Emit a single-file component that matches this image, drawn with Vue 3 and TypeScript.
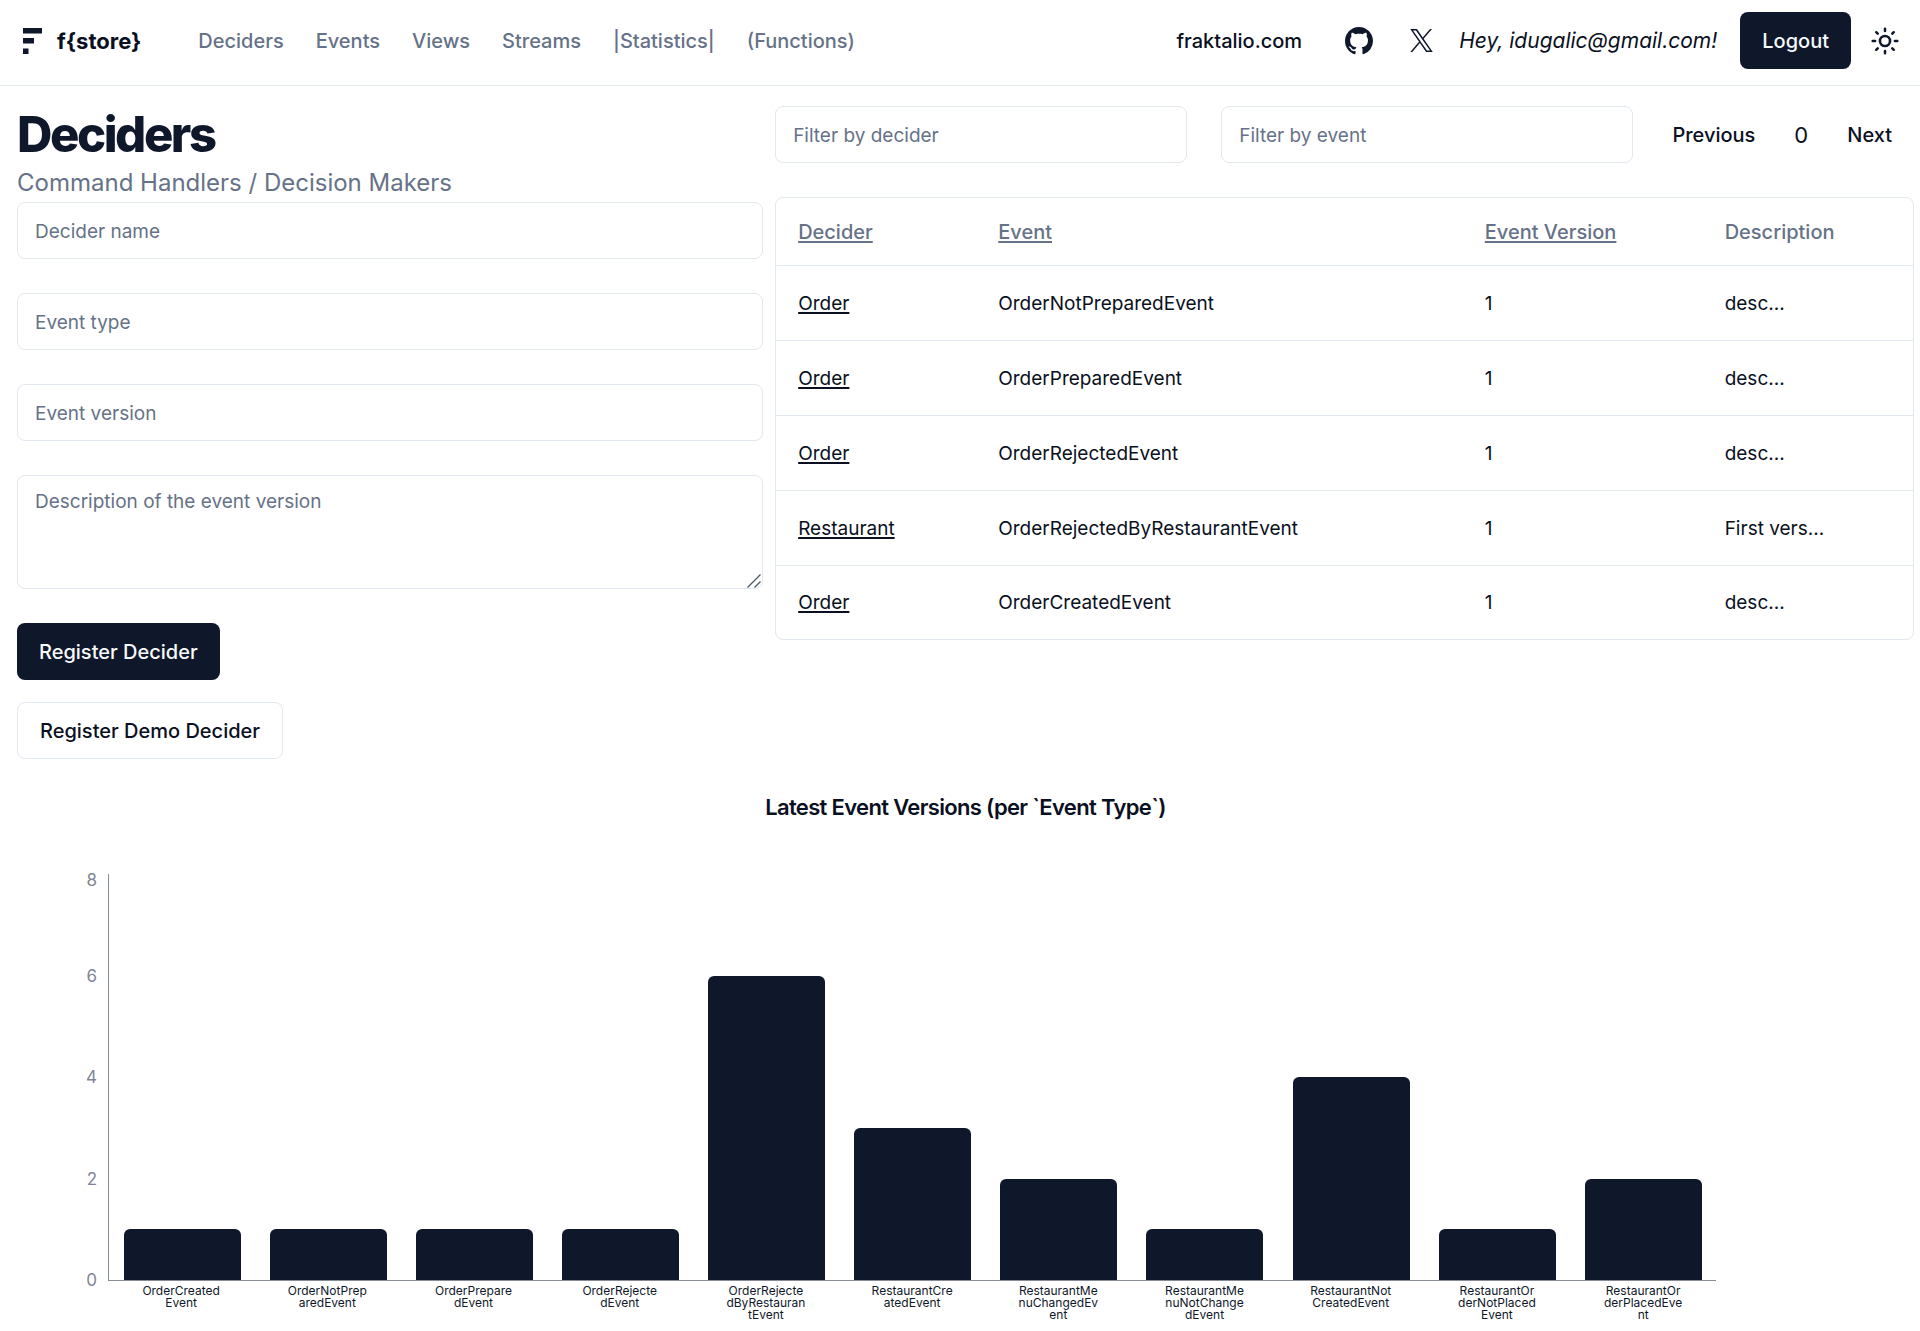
<script setup lang="ts">
import { computed, ref } from 'vue'

interface EventRow {
  decider: string
  event: string
  version: number
  description: string
}

interface Bar {
  lines: string[]
  value: number
}

const navLinks: string[] = ['Deciders', 'Events', 'Views', 'Streams', '|Statistics|', '(Functions)']

const rows: EventRow[] = [
  { decider: 'Order', event: 'OrderNotPreparedEvent', version: 1, description: 'desc...' },
  { decider: 'Order', event: 'OrderPreparedEvent', version: 1, description: 'desc...' },
  { decider: 'Order', event: 'OrderRejectedEvent', version: 1, description: 'desc...' },
  { decider: 'Restaurant', event: 'OrderRejectedByRestaurantEvent', version: 1, description: 'First vers...' },
  { decider: 'Order', event: 'OrderCreatedEvent', version: 1, description: 'desc...' },
]

const axisMax = 8
const ticks: number[] = [8, 6, 4, 2, 0]
const bars: Bar[] = [
  { lines: ['OrderCreated', 'Event'], value: 1 },
  { lines: ['OrderNotPrep', 'aredEvent'], value: 1 },
  { lines: ['OrderPrepare', 'dEvent'], value: 1 },
  { lines: ['OrderRejecte', 'dEvent'], value: 1 },
  { lines: ['OrderRejecte', 'dByRestauran', 'tEvent'], value: 6 },
  { lines: ['RestaurantCre', 'atedEvent'], value: 3 },
  { lines: ['RestaurantMe', 'nuChangedEv', 'ent'], value: 2 },
  { lines: ['RestaurantMe', 'nuNotChange', 'dEvent'], value: 1 },
  { lines: ['RestaurantNot', 'CreatedEvent'], value: 4 },
  { lines: ['RestaurantOr', 'derNotPlaced', 'Event'], value: 1 },
  { lines: ['RestaurantOr', 'derPlacedEve', 'nt'], value: 2 },
]

const deciderFilter = ref('')
const eventFilter = ref('')
const page = ref(0)

const visibleRows = computed(() =>
  rows.filter(
    (r) =>
      r.decider.toLowerCase().includes(deciderFilter.value.toLowerCase()) &&
      r.event.toLowerCase().includes(eventFilter.value.toLowerCase()),
  ),
)
</script>

<template>
  <div class="app">
    <header class="topbar">
      <a class="brand" href="#">
        <svg class="brand-mark" viewBox="0 0 19 26" aria-hidden="true">
          <path d="M0 0h19v5.500H0zM0 10h11v5.500H0zM0 20.500h5.500v5.500H0z" fill="currentColor" />
        </svg>
        <span>f{store}</span>
      </a>
      <nav class="nav">
        <a v-for="link in navLinks" :key="link" href="#">{{ link }}</a>
      </nav>
      <div class="account">
        <a class="site" href="#">fraktalio.com</a>
        <a class="icon-link github" href="#" aria-label="GitHub">
          <svg width="28" height="28" viewBox="0 0 16 16" aria-hidden="true">
            <path
              fill="currentColor"
              d="M8 0C3.58 0 0 3.58 0 8c0 3.54 2.29 6.53 5.47 7.59.4.07.55-.17.55-.38 0-.19-.01-.82-.01-1.49-2.01.37-2.53-.49-2.69-.94-.09-.23-.48-.94-.82-1.13-.28-.15-.68-.52-.01-.53.63-.01 1.08.58 1.23.82.72 1.21 1.87.87 2.33.66.07-.52.28-.87.51-1.07-1.78-.2-3.64-.89-3.64-3.95 0-.87.31-1.59.82-2.15-.08-.2-.36-1.02.08-2.12 0 0 .67-.21 2.2.82.64-.18 1.32-.27 2-.27s1.36.09 2 .27c1.53-1.04 2.2-.82 2.2-.82.44 1.1.16 1.92.08 2.12.51.56.82 1.27.82 2.15 0 3.07-1.87 3.75-3.65 3.95.29.25.54.73.54 1.48 0 1.07-.01 1.93-.01 2.2 0 .21.15.46.55.38A8.01 8.01 0 0 0 16 8c0-4.42-3.58-8-8-8z"
            />
          </svg>
        </a>
        <a class="icon-link x-link" href="#" aria-label="X">
          <svg width="23" height="23" viewBox="0 0 1200 1227" aria-hidden="true">
            <path
              fill="currentColor"
              d="M714.163 519.284L1160.89 0H1055.03L667.137 450.887L357.328 0H0L468.492 681.821L0 1226.37H105.866L515.491 750.218L842.672 1226.37H1200L714.137 519.284H714.163ZM569.165 687.828L521.697 619.934L144.011 79.6944H306.615L611.412 515.685L658.88 583.579L1055.08 1150.3H892.476L569.165 687.854V687.828Z"
            />
          </svg>
        </a>
        <em class="greeting">Hey, idugalic@gmail.com!</em>
        <button class="btn btn-primary" type="button">Logout</button>
        <button class="theme-toggle" type="button" aria-label="Toggle theme">
          <svg width="28" height="28" viewBox="0 0 15 15" fill="none" stroke="currentColor" stroke-linecap="round" aria-hidden="true">
            <circle cx="7.5" cy="7.5" r="2.7" stroke-width="1.4" />
            <path
              stroke-width="1.35"
              d="M7.5.9v1.3M7.5 12.8v1.3M.9 7.5h1.3M12.8 7.5h1.3M2.8 2.8l.8.8M11.4 11.4l.8.8M2.8 12.2l.8-.8M11.4 3.6l.8-.8"
            />
          </svg>
        </button>
      </div>
    </header>

    <main class="content">
      <div class="columns">
        <section class="register">
          <h1>Deciders</h1>
          <p class="subtitle">Command Handlers / Decision Makers</p>
          <form class="form" @submit.prevent>
            <input class="field" type="text" placeholder="Decider name" aria-label="Decider name" />
            <input class="field" type="text" placeholder="Event type" aria-label="Event type" />
            <input class="field" type="text" placeholder="Event version" aria-label="Event version" />
            <div class="area-wrap">
              <textarea
                class="field area"
                placeholder="Description of the event version"
                aria-label="Description of the event version"
              ></textarea>
              <svg class="grip" width="14" height="14" viewBox="0 0 14 14" aria-hidden="true">
                <path d="M.5 13.5l13-13M7.500 13.5l6-6" stroke="currentColor" stroke-width="1.3" />
              </svg>
            </div>
            <button class="btn btn-primary" type="submit">Register Decider</button>
          </form>
          <button class="btn btn-outline" type="button">Register Demo Decider</button>
        </section>

        <section class="listing">
          <div class="toolbar">
            <div class="filters">
              <input v-model="deciderFilter" class="field" type="text" placeholder="Filter by decider" aria-label="Filter by decider" />
              <input v-model="eventFilter" class="field" type="text" placeholder="Filter by event" aria-label="Filter by event" />
            </div>
            <div class="pager">
              <button class="btn btn-ghost" type="button" @click="page = Math.max(0, page - 1)">Previous</button>
              <span class="page">{{ page }}</span>
              <button class="btn btn-ghost" type="button" @click="page++">Next</button>
            </div>
          </div>
          <div class="table-frame">
            <table>
              <colgroup>
                <col class="col-decider" />
                <col class="col-event" />
                <col class="col-version" />
                <col />
              </colgroup>
              <thead>
                <tr>
                  <th scope="col"><a href="#">Decider</a></th>
                  <th scope="col"><a href="#">Event</a></th>
                  <th scope="col"><a href="#">Event Version</a></th>
                  <th scope="col">Description</th>
                </tr>
              </thead>
              <tbody>
                <tr v-for="row in visibleRows" :key="row.event">
                  <td><a href="#">{{ row.decider }}</a></td>
                  <td>{{ row.event }}</td>
                  <td>{{ row.version }}</td>
                  <td>{{ row.description }}</td>
                </tr>
              </tbody>
            </table>
          </div>
        </section>
      </div>

      <section class="versions">
        <h2>Latest Event Versions (per `Event Type`)</h2>
        <div class="chart">
          <ul class="y-axis">
            <li v-for="tick in ticks" :key="tick">{{ tick }}</li>
          </ul>
          <div class="plot">
            <div class="bars">
              <div v-for="(bar, i) in bars" :key="i" class="slot">
                <div class="bar" :style="{ height: (bar.value / axisMax) * 100 + '%' }"></div>
              </div>
            </div>
            <ul class="x-axis">
              <li v-for="(bar, i) in bars" :key="i">
                <span v-for="line in bar.lines" :key="line">{{ line }}</span>
              </li>
            </ul>
          </div>
        </div>
      </section>
    </main>
  </div>
</template>

<style>
body {
  margin: 0;
  background: #fff;
}
</style>

<style scoped>
.app {
  font-family: Inter, "Liberation Sans", sans-serif;
  font-size: 20px;
  line-height: 28px;
  color: #0a1022;
}

.app *,
.app *::before {
  box-sizing: border-box;
}

a {
  color: inherit;
  text-decoration: none;
}

h1,
h2,
p,
ul {
  margin: 0;
  padding: 0;
}

ul {
  list-style: none;
}

.topbar {
  display: flex;
  align-items: center;
  padding: 12px 21px 16px 23px;
  border-bottom: 1px solid #e2e8f0;
}

.brand {
  display: flex;
  align-items: center;
  gap: 15px;
  font-size: 22px;
  font-weight: 700;
}

.brand-mark {
  width: 19px;
  height: 26px;
  color: #0f172a;
}

.nav {
  display: flex;
  gap: 32px;
  margin-left: 57px;
  font-weight: 500;
  color: #667287;
}

.account {
  display: flex;
  align-items: center;
  margin-left: auto;
}

.site {
  font-weight: 500;
}

.icon-link {
  display: flex;
  color: #0f172a;
}

.github {
  margin-left: 43px;
}

.x-link {
  margin-left: 37px;
}

.greeting {
  margin: 0 23px 0 26px;
  font-size: 21px;
}

.btn {
  height: 57px;
  padding: 0 22px;
  border: 0;
  border-radius: 8px;
  background: none;
  font: inherit;
  font-weight: 500;
  color: #0a1022;
  white-space: nowrap;
}

.btn-primary {
  background: #0f172a;
  color: #f8fafc;
}

.btn-outline {
  margin-top: 22px;
  border: 1px solid #e2e8f0;
}

.theme-toggle {
  display: flex;
  margin-left: 20px;
  padding: 0;
  border: 0;
  background: none;
  color: #0f172a;
}

.content {
  padding: 20px 6px 0 17px;
}

.columns {
  display: grid;
  grid-template-columns: minmax(0, 19fr) minmax(0, 29fr);
  column-gap: 12px;
  align-items: start;
}

h1 {
  font-size: 49px;
  line-height: 58px;
  font-weight: 800;
  letter-spacing: -0.05em;
  color: #0f172a;
}

.subtitle {
  font-size: 24px;
  line-height: 38px;
  color: #667287;
}

.form {
  display: flex;
  flex-direction: column;
  align-items: flex-start;
  gap: 34px;
}

.field {
  display: block;
  width: 100%;
  height: 57px;
  padding: 2px 17px 0;
  border: 1px solid #e2e8f0;
  border-radius: 8px;
  background: #fff;
  font: inherit;
  font-size: 19px;
  color: #0a1022;
}

.field::placeholder {
  color: #667287;
  opacity: 1;
}

.area-wrap {
  position: relative;
  width: 100%;
}

.area {
  height: 114px;
  padding: 12px 17px;
  resize: none;
}

.grip {
  position: absolute;
  right: 2px;
  bottom: 1px;
  color: #475569;
  pointer-events: none;
}

.toolbar {
  display: flex;
  gap: 17px;
}

.filters {
  display: flex;
  flex: 1;
  gap: 34px;
  min-width: 0;
}

.pager {
  display: flex;
  align-items: center;
  gap: 17px;
}

.page {
  font-size: 22px;
}

.table-frame {
  margin-top: 34px;
  border: 1px solid #e2e8f0;
  border-radius: 8px;
}

table {
  width: 100%;
  table-layout: fixed;
  border-collapse: collapse;
}

.col-decider {
  width: 17.6%;
}

.col-event {
  width: 42.8%;
}

.col-version {
  width: 21.1%;
}

th,
td {
  padding: 2px 22px 0;
  text-align: left;
  white-space: nowrap;
}

th {
  height: 67px;
  font-weight: 500;
  color: #667287;
}

td {
  height: 75px;
  font-size: 19px;
}

tbody tr {
  border-top: 1px solid #e2e8f0;
}

tbody tr:last-child td {
  height: 74px;
}

th a,
td a {
  text-decoration: underline;
  text-decoration-thickness: 2px;
  text-underline-offset: 2px;
}

h2 {
  margin-top: 28px;
  font-size: 22px;
  line-height: 40px;
  font-weight: 600;
  letter-spacing: -0.03em;
  text-align: center;
}

.chart {
  display: flex;
  width: 90%;
  margin-top: 43px;
  padding-right: 8px;
}

.y-axis {
  display: grid;
  grid-template-rows: 20px 96px repeat(3, 1fr);
  align-items: end;
  width: 91px;
  height: 420px;
  padding-right: 11px;
  font-size: 17px;
  line-height: 20px;
  text-align: right;
  color: #7f8596;
}

.plot {
  flex: 1;
  min-width: 0;
  margin-top: 4px;
}

.bars {
  display: flex;
  height: 407px;
  border-left: 1px solid #888c99;
  border-bottom: 1px solid #888c99;
}

.slot {
  display: flex;
  flex: 1;
  align-items: flex-end;
  justify-content: center;
}

.bar {
  width: 80%;
  border-radius: 6px 6px 0 0;
  background: #0f172a;
}

.x-axis {
  display: flex;
  margin-top: 4px;
  font-size: 12px;
  line-height: 12px;
  color: #0f172a;
}

.x-axis li {
  display: flex;
  flex: 1;
  flex-direction: column;
  align-items: center;
  min-width: 0;
}
</style>
